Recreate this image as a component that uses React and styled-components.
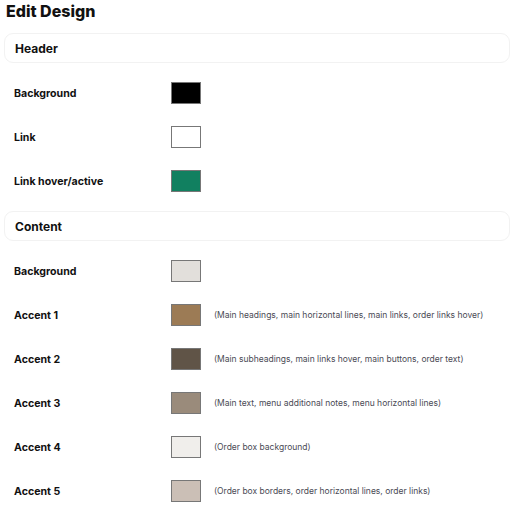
import React from 'react';
import styled, { createGlobalStyle } from "styled-components";

const GlobalStyle = createGlobalStyle`
  html, body {
    margin: 0;
    padding: 0;
    background: #ffffff;
  }
  body {
    font-family: Inter, "Noto Sans", "Liberation Sans", sans-serif;
    color: #111;
  }
`;

const sections = [
  {
    title: "Header",
    rows: [
      { label: "Background", color: "#000000" },
      { label: "Link", color: "#ffffff" },
      { label: "Link hover/active", color: "#118060" },
    ],
  },
  {
    title: "Content",
    rows: [
      { label: "Background", color: "#e2dfdb" },
      { label: "Accent 1", color: "#9c7b55", note: "(Main headings, main horizontal lines, main links, order links hover)" },
      { label: "Accent 2", color: "#605447", note: "(Main subheadings, main links hover, main buttons, order text)" },
      { label: "Accent 3", color: "#9a8b7b", note: "(Main text, menu additional notes, menu horizontal lines)" },
      { label: "Accent 4", color: "#f0eeeb", note: "(Order box background)" },
      { label: "Accent 5", color: "#cbbfb6", note: "(Order box borders, order horizontal lines, order links)" },
    ],
  },
];

export default function App() {
  return (
    <>
      <GlobalStyle />
      <Container>
        <Title>Edit Design</Title>
        {sections.map((section) => (
          <Section key={section.title}>
            <SectionHead>{section.title}</SectionHead>
            <Rows>
              {section.rows.map((row) => (
                <Row key={row.label}>
                  <Label>{row.label}</Label>
                  <Swatch $color={row.color} />
                  {row.note && <Note>{row.note}</Note>}
                </Row>
              ))}
            </Rows>
          </Section>
        ))}
      </Container>
    </>
  );
}

const Container = styled.div`
  width: 518px;
  padding: 0 8px 0 4px;
  box-sizing: border-box;
`;

const Title = styled.h1`
  margin: 0;
  padding: 1px 0 0 2px;
  height: 32px;
  font-size: 16px;
  font-weight: 800;
  line-height: 20px;
  color: #111;
`;

const Section = styled.section`
  display: flex;
  flex-direction: column;
  margin-bottom: 19px;
`;

const SectionHead = styled.div`
  height: 30px;
  display: flex;
  align-items: center;
  padding-left: 10px;
  border: 1px solid #f2f2f2;
  border-radius: 9px;
  box-sizing: border-box;
  font-size: 12px;
  font-weight: 700;
  color: #111;
`;

const Rows = styled.div`
  display: flex;
  flex-direction: column;
  gap: 22px;
  padding-top: 19px;
`;

const Row = styled.div`
  display: flex;
  align-items: center;
  height: 22px;
  padding-left: 10px;
`;

const Label = styled.div`
  width: 157px;
  font-size: 10.6px;
  font-weight: 700;
  color: #111;
`;

const Swatch = styled.div`
  width: 30px;
  height: 22px;
  box-sizing: border-box;
  border: 1px solid #777;
  background: ${(p) => p.$color};
`;

const Note = styled.div`
  margin-left: 13px;
  font-size: 8.5px;
  color: #4a4a55;
`;
